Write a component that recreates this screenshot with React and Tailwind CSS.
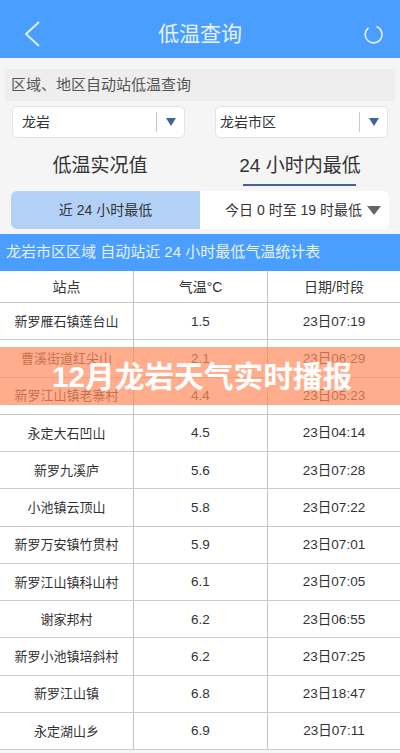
const rows = [
  ["新罗雁石镇莲台山", "1.5", "23日07:19"],
  ["曹溪街道红尖山", "2.1", "23日06:29"],
  ["新罗江山镇老寨村", "4.4", "23日05:23"],
  ["永定大石凹山", "4.5", "23日04:14"],
  ["新罗九溪庐", "5.6", "23日07:28"],
  ["小池镇云顶山", "5.8", "23日07:22"],
  ["新罗万安镇竹贯村", "5.9", "23日07:01"],
  ["新罗江山镇科山村", "6.1", "23日07:05"],
  ["谢家邦村", "6.2", "23日06:55"],
  ["新罗小池镇培斜村", "6.2", "23日07:25"],
  ["新罗江山镇", "6.8", "23日18:47"],
  ["永定湖山乡", "6.9", "23日07:11"],
]

function Select({ label, pad }) {
  return (
    <div className="w-[173px] h-[32px] flex items-center bg-white border border-[#e4e4e4] rounded-[5px]">
      <span className={`flex-1 text-[14px] text-[#333] ${pad}`}>{label}</span>
      <div className="w-[1px] h-[20px] bg-[#c8c8c8]" />
      <div className="w-[27px] flex justify-center">
        <div className="w-0 h-0 border-l-[5px] border-r-[5px] border-t-[8px] border-l-transparent border-r-transparent border-t-[#3f6596]" />
      </div>
    </div>
  )
}

function Row({ cells, head }) {
  return (
    <div className={`grid grid-cols-[134px_134px_132px] border-b-[1.5px] border-[#cccccc] text-[#333] ${head ? "h-[32px]" : "h-[37.25px]"}`}>
      <div className={`flex items-center justify-center border-r-[1.5px] border-[#c4c4c4] pt-[1px] ${head ? "text-[14px]" : "text-[13px]"}`}>{cells[0]}</div>
      <div className={`flex items-center justify-center border-r-[1.5px] border-[#c4c4c4] pt-[1px] ${head ? "text-[14px]" : "text-[13.5px]"}`}>{cells[1]}</div>
      <div className={`flex items-center justify-center pt-[1px] ${head ? "text-[14px]" : "text-[13.5px]"}`}>{cells[2]}</div>
    </div>
  )
}

export default function App() {
  return (
    <div
      className="relative w-[400px] h-[753px] overflow-hidden bg-[#f5f5f5]"
      style={{ fontFamily: '"Liberation Sans", "Noto Sans CJK SC", sans-serif' }}
    >
      <div className="h-[58px] bg-[#4a9eff] flex items-center pt-[10px]">
        <div className="w-[60px] pl-[24px]">
          <svg className="block" width="16" height="26" viewBox="0 0 16 26" fill="none" stroke="#e8f3ff" strokeWidth="1.8">
            <path d="M15 1 L2 13 L15 25" />
          </svg>
        </div>
        <span className="flex-1 text-center text-[21px] text-[#e8f3ff]">低温查询</span>
        <div className="w-[60px] flex justify-end pr-[17px]">
          <svg className="block" width="19" height="19" viewBox="0 0 19 19" fill="none" stroke="#e8f3ff" strokeWidth="1.6">
            <path d="M12.5 1.6 A8.4 8.4 0 1 1 4.5 2.8" />
          </svg>
        </div>
      </div>

      <div className="mt-[11px] mx-[5px] h-[32px] bg-[#eeeeee] flex items-center pl-[6px] text-[15px] text-[#555]">
        区域、地区自动站低温查询
      </div>

      <div className="mt-[5px] flex gap-[30px] px-[12px]">
        <Select label="龙岩" pad="pl-[9px]" />
        <Select label="龙岩市区" pad="pl-[4px]" />
      </div>

      <div className="mt-[12px] flex h-[35px] text-[19px] text-[#333]">
        <div className="w-[200px] flex items-center justify-center pb-[2px]">低温实况值</div>
        <div className="w-[200px] flex items-center justify-center pb-[2px] relative">
          24 小时内最低
          <div className="absolute left-[43px] bottom-[-1px] w-[113px] h-[2px] bg-[#3f6596]" />
        </div>
      </div>

      <div className="mt-[6px] mx-[11px] h-[38px] flex rounded-[6px] overflow-hidden bg-white text-[14px] text-[#333]">
        <div className="w-[189px] bg-[#b3d1f7] flex items-center justify-center">近 24 小时最低</div>
        <div className="flex-1 flex items-center justify-end pr-[8px] gap-[5px]">
          今日 0 时至 19 时最低
          <div className="w-0 h-0 border-l-[7px] border-r-[7px] border-t-[9px] border-l-transparent border-r-transparent border-t-[#666]" />
        </div>
      </div>

      <div className="mt-[5px] h-[37px] bg-[#4a9eff] flex items-center pl-[6px] text-[15px] text-[#e8f3ff]">
        龙岩市区区域 自动站近 24 小时最低气温统计表
      </div>

      <div className="bg-white">
        <Row head cells={["站点", "气温°C", "日期/时段"]} />
        {rows.map((r) => (
          <Row key={r[0]} cells={r} />
        ))}
      </div>

      <div className="absolute left-0 top-[347px] w-full h-[58px] bg-[#ff8a5c]/70 flex items-center pl-[52px] pt-[3px] text-[29.7px] font-bold text-white">
        12月龙岩天气实时播报
      </div>
    </div>
  )
}
